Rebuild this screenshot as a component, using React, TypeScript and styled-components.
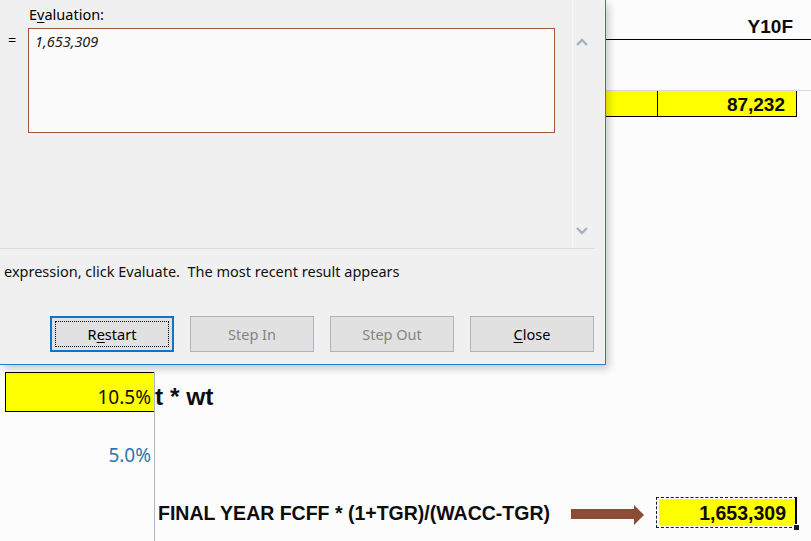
import React from "react";
import styled, { createGlobalStyle, css } from "styled-components";

const GlobalStyle = createGlobalStyle`
  html, body { margin: 0; padding: 0; background: #fcfcfc; }
  body { font-family: "Noto Sans", "Liberation Sans", sans-serif; }
  * { box-sizing: border-box; }
`;

const Page = styled.div`
  position: relative;
  width: 811px;
  height: 541px;
  overflow: hidden;
  background: #fcfcfc;
`;

/* ---------- spreadsheet ---------- */

const Sheet = styled.div`
  display: grid;
  grid-template-columns: 5px 149px 452px 51px 140px 1fr;
  grid-template-rows: 40px 50px 27px 255px 40px 85px 32px 1fr;
  width: 811px;
  height: 541px;
  font-family: "Liberation Sans", Arial, sans-serif;
  color: #0d0d0d;
`;

const HeaderBand = styled.div`
  grid-column: 4 / 7;
  grid-row: 1;
  display: flex;
  justify-content: flex-end;
  align-items: flex-end;
  padding: 0 18px 3px 0;
  border-bottom: 1px solid #000;
`;

const BoldText = styled.span<{ $size: number }>`
  font-family: "Liberation Sans", Arial, sans-serif;
  font-weight: 700;
  font-size: ${(p) => p.$size}px;
  line-height: 1;
  white-space: pre;
`;

const YellowBand = styled.div`
  grid-column: 4 / 7;
  grid-row: 3;
  display: grid;
  grid-template-columns: 51px 140px 1fr;
  border-top: 1px solid #d3d8de;
`;

const YellowCell = styled.div<{ $boxed?: boolean }>`
  background: #ffff00;
  border-bottom: 1px solid #000;
  display: flex;
  justify-content: flex-end;
  align-items: flex-end;
  padding: 0 11px 2px 0;
  ${(p) =>
    p.$boxed &&
    css`
      border-left: 1px solid #000;
      border-right: 1px solid #000;
    `}
`;

const PctCell = styled.div<{ $row: number; $filled?: boolean; $pb: number }>`
  grid-column: 2;
  grid-row: ${(p) => p.$row};
  display: flex;
  justify-content: flex-end;
  align-items: flex-end;
  padding: 0 3px ${(p) => p.$pb}px 0;
  font-family: "Noto Sans", sans-serif;
  font-size: 19px;
  line-height: 1;
  color: ${(p) => (p.$filled ? "#111" : "#2e75b6")};
  ${(p) =>
    p.$filled &&
    css`
      background: #ffff00;
      border: 1px solid #000;
      border-right: none;
    `}
`;

const ColCCell = styled.div<{ $row: number; $span?: boolean; $pb?: number }>`
  grid-column: ${(p) => (p.$span ? "3 / 5" : "3")};
  grid-row: ${(p) => p.$row};
  border-left: 1px solid #a9b8c8;
  display: flex;
  align-items: flex-end;
  padding: 0 0 ${(p) => p.$pb ?? 0}px ${(p) => (p.$span ? 3 : 0)}px;
`;

const ArrowIcon = styled.svg`
  margin-left: auto;
  margin-right: 13px;
  margin-bottom: -2px;
  flex: none;
`;

const ResultCell = styled.div`
  grid-column: 5;
  grid-row: 7;
  position: relative;
  height: 31px;
  margin-left: -1px;
  border: 1px dashed #1b1b1b;
  border-right: 2px solid #000;
  padding: 1px 0 1px 2px;
  background: #fcfcfc;
  display: flex;
`;

const ResultFill = styled.div`
  flex: 1;
  background: #ffff00;
  display: flex;
  justify-content: flex-end;
  align-items: flex-end;
  padding: 0 9px 3px 0;
`;

const FillHandle = styled.div`
  position: absolute;
  right: -5px;
  bottom: -4px;
  width: 7px;
  height: 7px;
  background: #1a1a1a;
  border: 1px solid #fcfcfc;
`;

/* ---------- dialog ---------- */

const Dialog = styled.div`
  position: absolute;
  top: 0;
  left: 0;
  width: 606px;
  height: 365px;
  background: #f0f0f0;
  border-right: 1px solid #2b79d3;
  border-bottom: 1px solid #2b79d3;
  box-shadow: 3px 4px 8px rgba(0, 0, 0, 0.2);
  display: flex;
  flex-direction: column;
  font-family: "Noto Sans", "Liberation Sans", sans-serif;
  font-size: 14.5px;
  color: #000;
`;

const TopArea = styled.div`
  display: flex;
  height: 249px;
  margin-right: 10px;
  border-bottom: 1px solid #dcdcdc;
`;

const LeftPane = styled.div`
  flex: 1;
  display: flex;
  flex-direction: column;
  padding: 4px 0 0 8px;
`;

const FieldLabel = styled.div`
  margin-left: 21px;
  line-height: 20px;
`;

const Accel = styled.span`
  text-decoration: underline;
  text-underline-offset: 2px;
`;

const ExprRow = styled.div`
  display: flex;
  align-items: flex-start;
  margin-top: 4px;
`;

const EqSign = styled.span`
  width: 20px;
  line-height: 20px;
  margin-top: 1px;
`;

const ResultBox = styled.div`
  width: 527px;
  height: 105px;
  border: 1px solid #a3573c;
  background: #fbfbfb;
  padding: 2px 6px;
  font-style: italic;
  line-height: 20px;
  color: #1a1a1a;
`;

const ScrollPane = styled.div`
  width: 23px;
  border-left: 1px solid #f7f7f7;
  display: flex;
  flex-direction: column;
  justify-content: space-between;
  align-items: center;
  padding: 38px 4px 13px 0;
`;

const Message = styled.div`
  margin-top: 12px;
  padding-left: 4px;
  line-height: 20px;
  white-space: pre;
  color: #111;
`;

const ButtonRow = styled.div`
  display: flex;
  justify-content: flex-end;
  gap: 16px;
  margin-top: 35px;
  padding-right: 11px;
`;

const Button = styled.div<{ $disabled?: boolean; $focused?: boolean }>`
  position: relative;
  width: 124px;
  height: 36px;
  display: flex;
  align-items: center;
  justify-content: center;
  background: #e1e1e1;
  border: 1px solid #adb3b8;
  font-size: 14.5px;
  color: ${(p) => (p.$disabled ? "#848484" : "#000")};
  ${(p) =>
    p.$focused &&
    css`
      border: 2px solid #0a74d0;
      &::after {
        content: "";
        position: absolute;
        inset: 3px;
        border: 1px dotted #000;
      }
    `}
`;

const Chevron = ({ down }: { down?: boolean }) => (
  <svg width="12" height="8" viewBox="0 0 12 8">
    <polyline
      points={down ? "1,1 6,6 11,1" : "1,7 6,2 11,7"}
      fill="none"
      stroke="#a5b2bf"
      strokeWidth="2.4"
    />
  </svg>
);

export default function App() {
  return (
    <>
      <GlobalStyle />
      <Page>
        <Sheet>
          <HeaderBand>
            <BoldText $size={19}>Y10F</BoldText>
          </HeaderBand>

          <YellowBand>
            <YellowCell />
            <YellowCell $boxed>
              <BoldText $size={19}>87,232</BoldText>
            </YellowCell>
          </YellowBand>

          <PctCell $row={5} $filled $pb={4}>
            10.5%
          </PctCell>
          <ColCCell $row={5} $pb={3}>
            <BoldText $size={24.5}>t * wt</BoldText>
          </ColCCell>

          <PctCell $row={6} $pb={32}>
            5.0%
          </PctCell>
          <ColCCell $row={6} />

          <ColCCell $row={7} $span $pb={6}>
            <BoldText $size={19.5}>FINAL YEAR FCFF * (1+TGR)/(WACC-TGR)</BoldText>
            <ArrowIcon width="73" height="20" viewBox="0 0 73 20">
              <rect x="0" y="4" width="64" height="10" fill="#8c4b35" />
              <polygon points="63,0 73,10 63,20" fill="#8c4b35" />
            </ArrowIcon>
          </ColCCell>
          <ResultCell>
            <ResultFill>
              <BoldText $size={19.5}>1,653,309</BoldText>
            </ResultFill>
            <FillHandle />
          </ResultCell>

          <ColCCell $row={8} />
        </Sheet>

        <Dialog>
          <TopArea>
            <LeftPane>
              <FieldLabel>
                E<Accel>v</Accel>aluation:
              </FieldLabel>
              <ExprRow>
                <EqSign>=</EqSign>
                <ResultBox>1,653,309</ResultBox>
              </ExprRow>
            </LeftPane>
            <ScrollPane>
              <Chevron />
              <Chevron down />
            </ScrollPane>
          </TopArea>
          <Message>expression, click Evaluate.  The most recent result appears</Message>
          <ButtonRow>
            <Button $focused>
              <span>
                R<Accel>e</Accel>start
              </span>
            </Button>
            <Button $disabled>Step In</Button>
            <Button $disabled>Step Out</Button>
            <Button>
              <span>
                <Accel>C</Accel>lose
              </span>
            </Button>
          </ButtonRow>
        </Dialog>
      </Page>
    </>
  );
}
